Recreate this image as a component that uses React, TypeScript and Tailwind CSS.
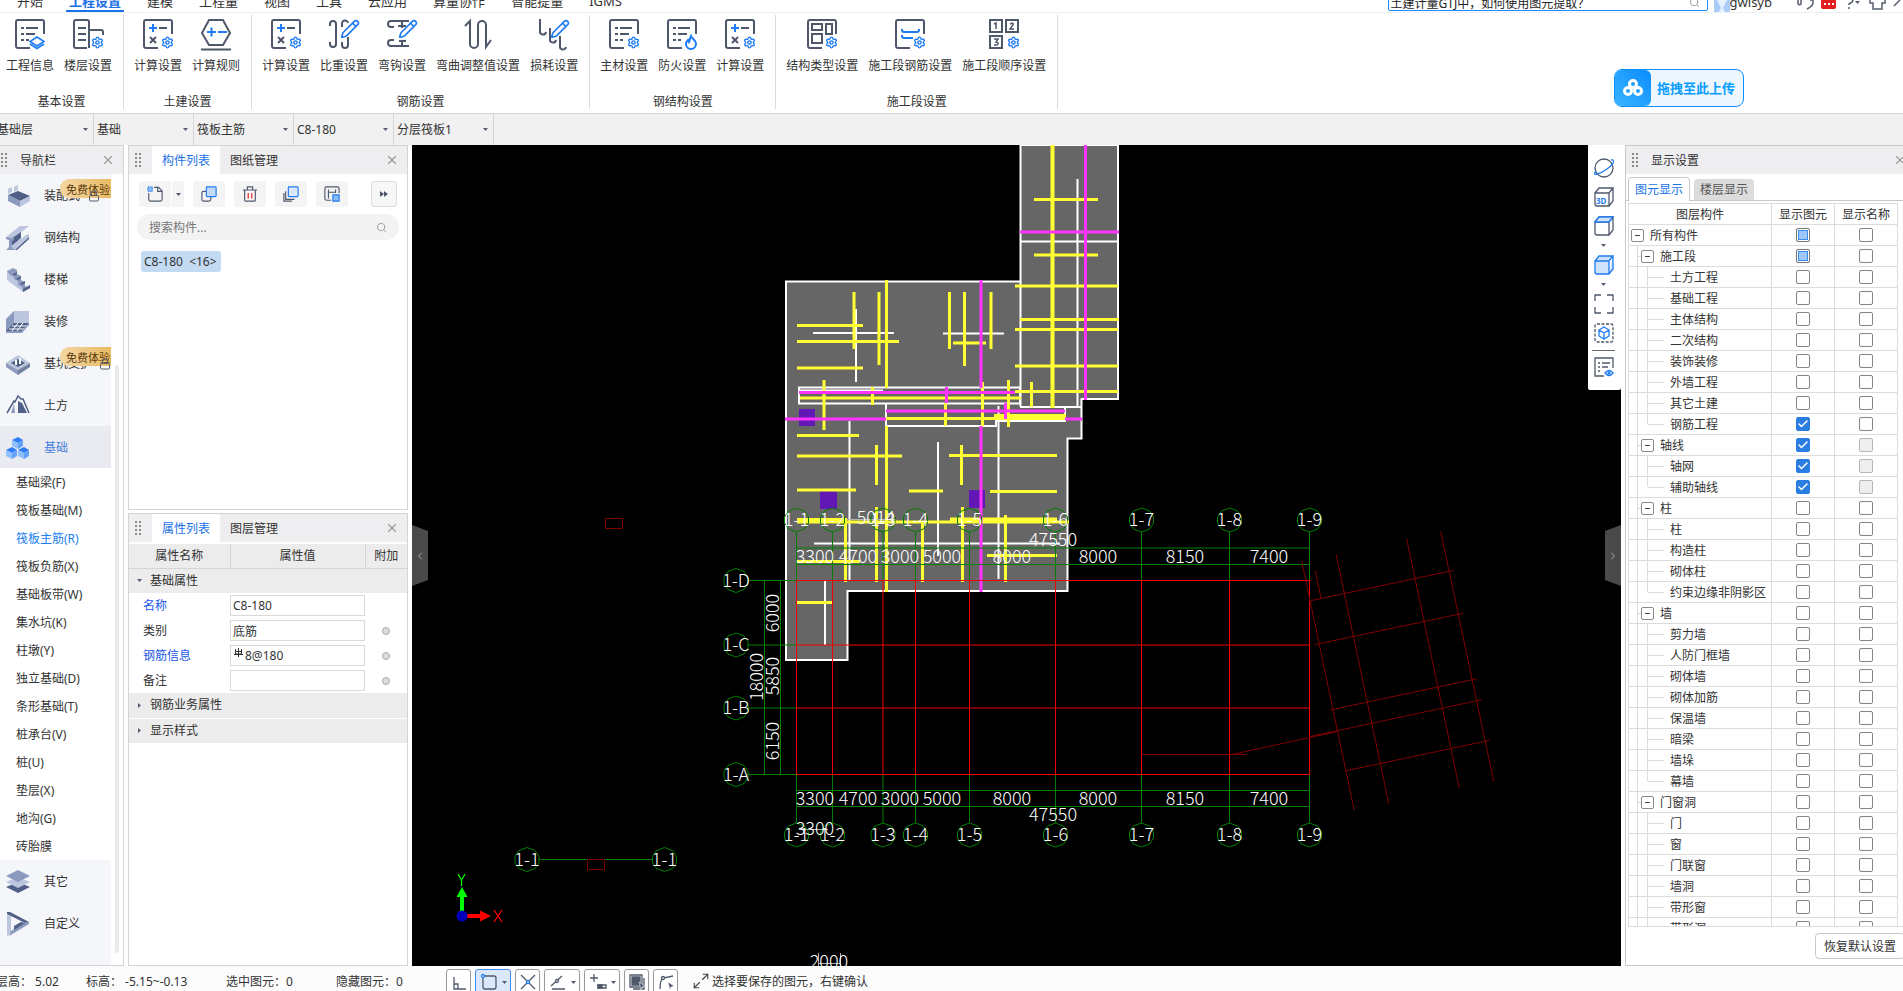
import { Fragment, type ReactNode } from "react";
import { Check, ChevronLeft, ChevronRight, Lock, Maximize2, Pencil, Search, Settings, X } from "lucide-react";

const menus = ["开始", "工程设置", "建模", "工程量", "视图", "工具", "云应用", "算量协作", "智能提量", "IGMS"];

const FRAME = "M29 15V3a2 2 0 0 0-2-2H3a2 2 0 0 0-2 2v24a2 2 0 0 0 2 2h12";

function Ico({ children }: { children: ReactNode }) {
  return (
    <svg width="30" height="30" viewBox="0 0 30 30" fill="none" stroke="#4f586b" strokeWidth="2" className="overflow-visible">
      {children}
    </svg>
  );
}

const Gear = () => <Settings x={18} y={17} size={13} strokeWidth={2.6} color="#1f7bf2" />;
const Pen = () => <Pencil x={11} y={0} size={20} strokeWidth={2} color="#1f7bf2" />;

const calcIcon = (
  <Ico>
    <path d={FRAME} />
    <path d="M6 9h8M10 5v8" stroke="#1f7bf2" />
    <path d="M16 9h8M7 18l6 6M13 18l-6 6" />
    <Gear />
  </Ico>
);

const ListLines = () => <path d="M6 9h3M11 9h12M6 15h3M11 15h9M6 21h3M11 21h3" />;

const ribbon = [
  {
    title: "基本设置",
    items: [
      {
        label: "工程信息",
        icon: (
          <Ico>
            <path d={FRAME} />
            <ListLines />
            <path d="M22 18l7 4.500-7 4.500-7-4.500zM15 25l7 4.500 7-4.500" stroke="#1f7bf2" strokeWidth="1.600" />
          </Ico>
        ),
      },
      {
        label: "楼层设置",
        icon: (
          <Ico>
            <path d="M14 29H3a2 2 0 0 1-2-2V3a2 2 0 0 1 2-2h11a2 2 0 0 1 2 2v26M16 11h12a2 2 0 0 1 2 2v3M5 9h8M5 15h8M5 21h8" />
            <Gear />
          </Ico>
        ),
      },
    ],
  },
  {
    title: "土建设置",
    items: [
      { label: "计算设置", icon: calcIcon },
      {
        label: "计算规则",
        icon: (
          <Ico>
            <path d="M8 1h14l7 13-7 12H8L1 14zM0 30.500h30" />
            <path d="M6 13h9M10.500 8.500v9M17 13h9" stroke="#1f7bf2" />
          </Ico>
        ),
      },
    ],
  },
  {
    title: "钢筋设置",
    items: [
      { label: "计算设置", icon: calcIcon },
      {
        label: "比重设置",
        icon: (
          <Ico>
            <path d="M1 7V5a3 3 0 0 1 6 0v20a3 3 0 0 1-6 0v-2M13 8V5a3 3 0 0 1 6-1M19 18v8a3 3 0 0 1-6 0v-3" />
            <Pen />
          </Ico>
        ),
      },
      {
        label: "弯钩设置",
        icon: (
          <Ico>
            <path d="M22 2H4a3 3 0 0 0 0 6h3M22 27H4a3 3 0 0 1 0-6h3M15 2v7M11 7h8M15 27v-5M12 22h7" />
            <Pen />
          </Ico>
        ),
      },
      {
        label: "弯曲调整值设置",
        icon: (
          <Ico>
            <path d="M2 7l5-5v23a4 4 0 0 0 8 0V6a4 4 0 0 1 8 0v22l5-7" />
          </Ico>
        ),
      },
      {
        label: "损耗设置",
        icon: (
          <Ico>
            <path d="M1 0v12a3 3 0 0 0 6 1M11 9v11a3 3 0 0 0 6 1M21 17v10a3 3 0 0 0 6 1" />
            <Pen />
          </Ico>
        ),
      },
    ],
  },
  {
    title: "钢结构设置",
    items: [
      {
        label: "主材设置",
        icon: (
          <Ico>
            <path d={FRAME} />
            <ListLines />
            <Gear />
          </Ico>
        ),
      },
      {
        label: "防火设置",
        icon: (
          <Ico>
            <path d={FRAME} />
            <ListLines />
            <path d="M24 17c1 3 5 4 5 8a5 5 0 0 1-10 0c0-2 1-3 2-4l1 2c1-2 1-4 2-6z" stroke="#1f7bf2" />
          </Ico>
        ),
      },
      { label: "计算设置", icon: calcIcon },
    ],
  },
  {
    title: "施工段设置",
    items: [
      {
        label: "结构类型设置",
        icon: (
          <Ico>
            <path d={FRAME} />
            <path d="M5 5h10v6H5zM19 5h6v10h-6zM5 15h10v9H5z" />
            <Gear />
          </Ico>
        ),
      },
      {
        label: "施工段钢筋设置",
        icon: (
          <Ico>
            <path d={FRAME} />
            <path d="M7 10v1a2 2 0 0 0 2 2h13a2 2 0 0 0 2-2v-1M7 16v1a2 2 0 0 0 2 2h9" stroke="#1f7bf2" />
            <Gear />
          </Ico>
        ),
      },
      {
        label: "施工段顺序设置",
        icon: (
          <Ico>
            <path d="M1 1h12v12H1zM17 1h12v12H17zM1 17h12v12H1z" />
            <path d="M5 5l2-1v6M21 5q4-2 3 1l-3 4h4M5 20h4l-2 3q4 1 1 3l-3 0" strokeWidth="1.500" />
            <Gear />
          </Ico>
        ),
      },
    ],
  },
];

const combos = ["基础层", "基础", "筏板主筋", "C8-180", "分层筏板1"];

const DARK = "#4f5f86";
const MID = "#8c9abf";
const LIGHT = "#bcc6de";

function NavIco({ children }: { children: ReactNode }) {
  return (
    <svg width="24" height="24" viewBox="0 0 24 24" className="shrink-0">
      {children}
    </svg>
  );
}

const navTop = [
  {
    label: "装配式",
    badge: "left-[88px]",
    icon: (
      <NavIco>
        <path d="M2 11l10-4 12 5-10 5z" fill={DARK} />
        <path d="M2 11l12 6v6L2 17z" fill={MID} />
        <path d="M14 17l10-5v5l-10 6z" fill={LIGHT} />
        <path d="M2 5l4-2v5L2 10zM8 3l4-2v5L8 8z" fill={LIGHT} />
      </NavIco>
    ),
  },
  {
    label: "钢结构",
    icon: (
      <NavIco>
        <path d="M0 11L14 0h9L8 12z" fill={LIGHT} />
        <path d="M5 13l10-7v6L5 21z" fill={DARK} />
        <path d="M0 11l8 1v2l-2 1v6l3 2v1H0l3-3v-7l-3-1z" fill={MID} />
        <path d="M5 20L20 9l3-1v3L9 24z" fill={LIGHT} />
        <path d="M9 24L23 11v2L11 24z" fill={DARK} />
      </NavIco>
    ),
  },
  {
    label: "楼梯",
    icon: (
      <NavIco>
        <path d="M1 3l0 9 16 12V17L4 3z" fill={LIGHT} />
        <path d="M1 3l6-3 4 2v4l4 2v4l4 2v4l5 2-7 4-1-5-4-2v-4l-4-2V9L4 7z" fill={MID} />
        <path d="M7 6l4-2v2l-3 2zM10 11l5-3v2l-3 2zM14 16l5-3v2l-3 2zM17 21l7-4v3l-7 4z" fill={DARK} />
      </NavIco>
    ),
  },
  {
    label: "装修",
    icon: (
      <NavIco>
        <path d="M8 1h15v13H8z" fill={LIGHT} />
        <path d="M8 1v13L0 22V9z" fill={MID} />
        <path d="M8 13h15l-7 8H0z" fill={DARK} />
        <path d="M6 16h15M3 19h16M12 13l-6 8M17 13l-6 8" stroke="#fff" strokeWidth="1" />
        <path d="M0 21h16l7-8v2l-7 8H0z" fill={MID} />
      </NavIco>
    ),
  },
  {
    label: "基坑支护",
    badge: "left-[99px]",
    icon: (
      <NavIco>
        <path d="M12 3l12 8-12 7L0 11z" fill={LIGHT} />
        <path d="M12 7l7 4-7 4-7-4z" fill={DARK} />
        <path d="M9 8h2v5H9zM13 6h2v6h-2z" fill="#fff" />
        <path d="M0 11l12 7v5L0 15z" fill={MID} />
        <path d="M24 11l-12 7v5l12-8z" fill="#73829f" />
      </NavIco>
    ),
  },
  {
    label: "土方",
    icon: (
      <NavIco>
        <path d="M1 19L8 7l1 1 3-6 3 3 2 0 6 14" fill="none" stroke={DARK} strokeWidth="1.500" />
        <path d="M12 7l4 2 5 10h-9z" fill={DARK} />
        <path d="M8 10l1 9H5z" fill={MID} />
      </NavIco>
    ),
  },
  {
    label: "基础",
    active: true,
    icon: (
      <NavIco>
        {[
          [6, 1],
          [0, 11],
          [12, 11],
        ].map(([x, y]) => (
          <g key={x} transform={`translate(${x} ${y})`}>
            <path d="M0 3l6-3 5 3-5 3z" fill="#2f7df6" />
            <path d="M0 3l6 3v6L0 9z" fill="#8fc0fd" />
            <path d="M11 3L6 6v6l5-3z" fill="#62a3fa" />
          </g>
        ))}
      </NavIco>
    ),
  },
];

const navBottom = [
  {
    label: "其它",
    icon: (
      <NavIco>
        <path d="M12 12l12 5-12 6-12-6z" fill={DARK} />
        <path d="M12 7l12 5-12 6-12-6z" fill={LIGHT} />
        <path d="M12 0l12 6-12 6L0 6z" fill={MID} />
      </NavIco>
    ),
  },
  {
    label: "自定义",
    icon: (
      <NavIco>
        <path d="M1 2l4 2v16l-3 4-1-1z" fill={LIGHT} />
        <path d="M1 0h3l19 10-4 1L5 4 1 2z" fill={DARK} />
        <path d="M23 10v2L3 24l2-5 13-8z" fill={MID} />
        <path d="M8 14l7-4 4 1L8 18z" fill={DARK} />
      </NavIco>
    ),
  },
];

const subItems = [
  "基础梁(F)",
  "筏板基础(M)",
  "筏板主筋(R)",
  "筏板负筋(X)",
  "基础板带(W)",
  "集水坑(K)",
  "柱墩(Y)",
  "独立基础(D)",
  "条形基础(T)",
  "桩承台(V)",
  "桩(U)",
  "垫层(X)",
  "地沟(G)",
  "砖胎膜",
];

type Mark = "on" | "off" | "part" | "dis";
type Row = { t: string; lv: 0 | 1 | 2; a?: Mark; b?: Mark; last?: boolean };

const rows: Row[] = [
  { t: "所有构件", lv: 0, a: "part" },
  { t: "施工段", lv: 1, a: "part" },
  { t: "土方工程", lv: 2 },
  { t: "基础工程", lv: 2 },
  { t: "主体结构", lv: 2 },
  { t: "二次结构", lv: 2 },
  { t: "装饰装修", lv: 2 },
  { t: "外墙工程", lv: 2 },
  { t: "其它土建", lv: 2 },
  { t: "钢筋工程", lv: 2, a: "on", last: true },
  { t: "轴线", lv: 1, a: "on", b: "dis" },
  { t: "轴网", lv: 2, a: "on", b: "dis" },
  { t: "辅助轴线", lv: 2, a: "on", b: "dis", last: true },
  { t: "柱", lv: 1 },
  { t: "柱", lv: 2 },
  { t: "构造柱", lv: 2 },
  { t: "砌体柱", lv: 2 },
  { t: "约束边缘非阴影区", lv: 2, last: true },
  { t: "墙", lv: 1 },
  { t: "剪力墙", lv: 2 },
  { t: "人防门框墙", lv: 2 },
  { t: "砌体墙", lv: 2 },
  { t: "砌体加筋", lv: 2 },
  { t: "保温墙", lv: 2 },
  { t: "暗梁", lv: 2 },
  { t: "墙垛", lv: 2 },
  { t: "幕墙", lv: 2, last: true },
  { t: "门窗洞", lv: 1 },
  { t: "门", lv: 2 },
  { t: "窗", lv: 2 },
  { t: "门联窗", lv: 2 },
  { t: "墙洞", lv: 2 },
  { t: "带形窗", lv: 2 },
  { t: "带形洞", lv: 2 },
];

function Grip() {
  return (
    <svg width="7" height="15" viewBox="0 0 7 15" fill="#8a8a8a" className="shrink-0">
      {[0, 4, 8, 12].map((y) => (
        <Fragment key={y}>
          <rect x="0" y={y} width="2" height="2" />
          <rect x="4" y={y} width="2" height="2" />
        </Fragment>
      ))}
    </svg>
  );
}

function Caret({ className = "" }: { className?: string }) {
  return (
    <svg width="5" height="3" viewBox="0 0 5 3" fill="#555d6e" className={className}>
      <path d="M0 0h5L2.500 3z" />
    </svg>
  );
}

function CloseButton({ label }: { label: string }) {
  return (
    <button aria-label={label} className="shrink-0 text-[#9a9a9a]">
      <X size={14} strokeWidth={2} />
    </button>
  );
}

function NavItem({ item }: { item: { label: string; icon: ReactNode; badge?: string; active?: boolean } }) {
  return (
    <a
      href="#"
      className={`relative flex h-[42px] items-center gap-[14px] pt-[2px] pl-[6px] ${item.active ? "bg-[#e9ebf0] text-[#4a7fe0]" : ""}`}
    >
      {item.icon}
      {item.label}
      {item.badge && (
        <>
          <span className="absolute top-[5px] right-0 flex h-[19px] w-[51px] items-center rounded-l-[9px] bg-linear-to-r from-[#f3d6a2] to-[#e9bb62] pt-[2px] pl-[6px] text-[11px] text-[#5c3a10]">
            免费体验
          </span>
          <Lock size={12} className={`absolute top-4 text-[#555d6e] ${item.badge}`} />
        </>
      )}
    </a>
  );
}

function PanelTabs({ active, other }: { active: string; other: string }) {
  return (
    <div className="flex h-7 items-center bg-[#eeeef0] pr-2 pl-[6px]">
      <Grip />
      <button className="ml-[10px] h-7 bg-white px-[10px] pt-[2px] text-[#1a6fe6]">{active}</button>
      <button className="h-7 px-[10px] pt-[2px]">{other}</button>
      <span className="flex-1" />
      <CloseButton label={`关闭${active}`} />
    </div>
  );
}

function ToolButton({ label, children }: { label: string; children: ReactNode }) {
  return (
    <button aria-label={label} className="flex h-[26px] w-8 items-center justify-center rounded-[3px] bg-[#f4f4f5]">
      <svg width="16" height="16" viewBox="0 0 18 18" fill="none" stroke="#4f586b" strokeWidth="1.300">
        {children}
      </svg>
    </button>
  );
}

function Tick({ mark, label }: { mark: Mark; label: string }) {
  const look =
    mark === "part"
      ? "bg-[#9cc8fb] border-[#777] shadow-[inset_0_0_0_1px_#fff,inset_0_0_0_2px_#3d8bf0]"
      : mark === "dis"
        ? "bg-[#efefef] border-[#b5b5b5]"
        : "border-[#858585] checked:border-[#2a7de1] checked:bg-[#2a7de1]";
  return (
    <label className="relative mx-auto block size-[14px]">
      <input
        type="checkbox"
        aria-label={label}
        defaultChecked={mark === "on"}
        disabled={mark === "dis"}
        className={`peer block size-[14px] appearance-none rounded-[2px] border ${look}`}
      />
      <Check size={12} strokeWidth={3} className="pointer-events-none absolute top-px left-px hidden text-white peer-checked:block" />
    </label>
  );
}

function Expander({ name }: { name: string }) {
  return (
    <button
      aria-label={`折叠${name}`}
      className="flex size-[13px] shrink-0 items-center justify-center rounded-[2px] border border-[#8a8a8a] bg-white"
    >
      <span className="h-px w-[5px] bg-[#444]" />
    </button>
  );
}

function TreeRow({ row }: { row: Row }) {
  return (
    <tr className="h-[21px]">
      <td className="border border-[#dcdcdc] p-0">
        <div className="flex h-5 items-center whitespace-nowrap">
          {row.lv === 0 && (
            <span className="flex pl-[2px]">
              <Expander name={row.t} />
            </span>
          )}
          {row.lv > 0 && <span className="w-[9px] shrink-0 self-stretch border-r border-[#dcdcdc]" />}
          {row.lv === 1 && (
            <>
              <span className="h-px w-[3px] bg-[#dcdcdc]" />
              <Expander name={row.t} />
            </>
          )}
          {row.lv === 2 && (
            <>
              <span className={`w-[10px] shrink-0 border-r border-[#dcdcdc] ${row.last ? "h-[10px] self-start" : "self-stretch"}`} />
              <span className="h-px w-4 shrink-0 bg-[#dcdcdc]" />
            </>
          )}
          <span className="ml-[6px] pt-[2px]">{row.t}</span>
        </div>
      </td>
      <td className="border border-[#dcdcdc] p-0">
        <Tick mark={row.a ?? "off"} label={`${row.t}显示图元`} />
      </td>
      <td className="border border-[#dcdcdc] p-0">
        <Tick mark={row.b ?? "off"} label={`${row.t}显示名称`} />
      </td>
    </tr>
  );
}

// drawing data: vertical bars are [x, y1, y2], horizontal bars are [y, x1, x2]
const yellowV = [
  [854, 292, 349], [879, 292, 365], [886.5, 280, 388], [949.5, 292, 349], [964.5, 292, 366], [991, 292, 349],
  [824, 380, 430], [872.5, 387, 405], [982.5, 382, 426], [1008.5, 380, 427], [1031.5, 382, 407], [945.5, 403, 426],
  [876.5, 445, 485], [961.5, 445, 485], [886.5, 426, 592], [845.5, 522, 582], [876.5, 507, 582], [922.5, 523, 582],
  [962.5, 507, 582], [1005.5, 515, 582],
];
const yellowH = [
  [199.5, 1034, 1098], [255, 1034, 1098], [286, 1015, 1118], [319.5, 1020, 1119], [329.5, 1015, 1118],
  [366, 1015, 1118], [391.5, 1015, 1118], [325.5, 797, 863], [341.5, 797, 899], [368, 797, 863], [343, 953, 986],
  [398, 800, 1021], [418.5, 886, 1065], [415.5, 994, 1066], [435.5, 797, 859], [456, 797, 902], [455.5, 949, 1057],
  [490, 797, 856], [491, 909, 943], [491.5, 990, 1057], [519.5, 797, 847], [522, 797, 1069], [519, 950, 1057],
  [555.5, 987, 1057], [561.5, 797, 860], [602.5, 797, 833],
];
const magentaV = [[1085.5, 145, 400], [981, 280, 388], [946.5, 387, 403], [1005.5, 403, 419], [981, 426, 592]];
const magentaH = [[232, 1020, 1119], [392.5, 799, 1015], [411, 886, 1065], [419, 785, 886], [419, 1065, 1082]];
const whiteV = [
  [1077.5, 179, 406], [856, 309, 382], [998.5, 406, 579], [938, 442, 556], [849.5, 421, 580], [825, 580, 645],
  [1020.5, 281, 407],
];
const whiteH = [[241.5, 1020, 1118], [390.5, 799, 883], [333, 813, 894], [333.5, 943, 1004], [543.5, 814, 1060], [407, 1020, 1082]];

const v = (list: number[][]) => list.map(([x, a, b]) => `M${x} ${a}V${b}`).join("");
const h = (list: number[][]) => list.map(([y, a, b]) => `M${a} ${y}H${b}`).join("");

const axesX = [796.5, 832.5, 883, 915.5, 969.5, 1055.5, 1141.5, 1229.5, 1309.5];
const axesY: [string, number][] = [["1-D", 580.5], ["1-C", 645], ["1-B", 708], ["1-A", 774.5]];
const spans: [string, number][] = [
  ["3300", 815], ["4700", 858], ["3000", 900], ["5000", 942], ["8000", 1012], ["8000", 1098], ["8150", 1185], ["7400", 1269],
];
const tilted = [
  [1301.7, 561, 1354.3, 810.7], [1315.3, 570.7, 1321, 598.3], [1336, 554, 1388.7, 803.3], [1406.7, 539, 1459.3, 788.3],
  [1440.7, 531.3, 1493.7, 781.3], [1309.3, 601, 1453.7, 570.3], [1314.3, 644.7, 1463, 613.3], [1330, 710, 1477, 678.7],
  [1309.3, 736.7, 1481.7, 699.7], [1345, 771, 1489.7, 740.3], [1231.7, 754.5, 1336.7, 731.7], [1142, 754.5, 1246, 754.5],
];

function Bubble({ x, y, text }: { x: number; y: number; text: string }) {
  return (
    <g>
      <polygon
        points="0,-12 8,-9 12,-3 12,3 8,9 0,12 -8,9 -12,3 -12,-3 -8,-9"
        transform={`translate(${x} ${y})`}
        fill="none"
        stroke="#008000"
      />
      <text x={x} y={y + 6}>{text}</text>
    </g>
  );
}

function Drawing() {
  return (
    <svg viewBox="412 145 1209 821" preserveAspectRatio="xMidYMid slice" className="absolute inset-0 h-full w-full bg-black">
      <path
        d="M786 281.500H1020.500V145H1118V399H1081.500V438.500H1067.500V591H847.500V660H786z"
        fill="#666"
        stroke="#fff"
        strokeWidth="2"
      />
      <path d="M799 387.500H1020V403.500H799zM886 403V426H996V421H1065V407" fill="none" stroke="#fff" strokeWidth="2" />
      <path d={v(whiteV) + h(whiteH)} stroke="#fff" strokeWidth="2" />
      <g fill="#6118b4">
        <rect x="799" y="409" width="16" height="17" />
        <rect x="820" y="491" width="17" height="18" />
        <rect x="969" y="490" width="16" height="18" />
      </g>
      <path d="M1052.500 145V408" stroke="#ffff33" strokeWidth="4" />
      <path d={v(yellowV) + h(yellowH)} stroke="#ffff33" strokeWidth="3" />
      <path d={v(magentaV) + h(magentaH)} stroke="#ff33ff" strokeWidth="3" />

      <path d={v(axesX.map((x) => [x, 580, 775]))} stroke="#f00000" />
      <path d={h(axesY.map(([, y]) => [y, 796, 1310]))} stroke="#f00000" />
      <path d={v(axesX.flatMap((x) => [[x, 532, 580], [x, 775, 823]]))} stroke="#008000" />
      <path d="M796 548H1310M796 564.500H1310M796 790.500H1310M796 806.500H1310M764.500 580V775M780.500 580V775" stroke="#008000" />
      <path d={h(axesY.map(([, y]) => [y, 748, 796]))} stroke="#008000" />
      {tilted.map(([x1, y1, x2, y2]) => (
        <line key={`${x1}-${y1}`} x1={x1} y1={y1} x2={x2} y2={y2} stroke="#800000" />
      ))}
      <path d="M605.500 518.500h17v10h-17zM587.500 859.500h17v10h-17z" fill="none" stroke="#800000" />
      <path d="M539 859.500H587M605 859.500H653" stroke="#008000" />
      <path d="M847 519.500H885M799 829.500H828M818.500 953V966M840.500 953V966M818 963.500H840" stroke="#b5b5b5" />

      <g fill="#fff" fontSize="18" fontWeight="300" textAnchor="middle" fontFamily="'Noto Sans CJK SC', sans-serif">
        {axesX.map((x, i) => (
          <Fragment key={x}>
            <Bubble x={x} y={520} text={`1-${i + 1}`} />
            <Bubble x={x} y={835} text={`1-${i + 1}`} />
          </Fragment>
        ))}
        {axesY.map(([t, y]) => (
          <Bubble key={t} x={736} y={y} text={t} />
        ))}
        <Bubble x={527} y={859.5} text="1-1" />
        <Bubble x={664.5} y={859.5} text="1-1" />
        {spans.map(([t, x]) => (
          <Fragment key={x}>
            <text x={x} y="563">{t}</text>
            <text x={x} y="805">{t}</text>
          </Fragment>
        ))}
        <text x="1053" y="546">47550</text>
        <text x="1053" y="821">47550</text>
        <text x="876" y="524">5014</text>
        <text x="815" y="835">3300</text>
        <text x="829" y="968">2000</text>
        <text transform="translate(779 613) rotate(-90)">6000</text>
        <text transform="translate(779 676) rotate(-90)">5850</text>
        <text transform="translate(779 741) rotate(-90)">6150</text>
        <text transform="translate(763 677) rotate(-90)">18000</text>
      </g>

      <path d="M460 914V897H456.500L462 887L467.500 897H464V914z" fill="#00ff00" />
      <path d="M466 914H480V910.500L491 916L480 921.500V918H466z" fill="#ff0000" />
      <circle cx="462" cy="916" r="5.500" fill="#0000b8" />
      <path d="M458 874L461.500 880L465 874M461.500 880V886" fill="none" stroke="#00ff00" strokeWidth="1.300" />
      <path d="M494 910L502 922M502 910L494 922" stroke="#ff0000" strokeWidth="1.300" />
    </svg>
  );
}

function ViewButton({ label, children }: { label: string; children: ReactNode }) {
  return (
    <button aria-label={label}>
      <svg width="20" height="20" viewBox="0 0 20 20" fill="none" stroke="#4f586b" strokeWidth="1.300">
        {children}
      </svg>
    </button>
  );
}

const CUBE = "M1 6v11a2 2 0 0 0 2 2h12V6zM1 6l4-5h14l-4 5M19 1v13l-4 5";

function ViewBar() {
  return (
    <div className="absolute top-0 right-0 flex w-[33px] flex-col items-center rounded-b-[2px] bg-white pt-[13px] pr-[2px] pb-[13px]">
      <ViewButton label="动态观察">
        <circle cx="10" cy="10" r="9" />
        <path d="M2 13C-3 19 6 16 13 11S22 1 17 2" stroke="#1f7bf2" />
      </ViewButton>
      <span className="h-[9px]" />
      <ViewButton label="三维">
        <path d={CUBE} />
        <text x="2" y="17" fontSize="8" fontWeight="700" fill="#1f7bf2" stroke="none">3D</text>
      </ViewButton>
      <span className="h-[9px]" />
      <ViewButton label="俯视">
        <path d={CUBE} />
        <path d="M1 6l4-5h14l-4 5z" fill="#cfe2fb" stroke="#1f7bf2" />
      </ViewButton>
      <Caret className="my-[8px]" />
      <ViewButton label="实体显示">
        <path d={CUBE} fill="#cfe2fb" stroke="#1f7bf2" />
      </ViewButton>
      <Caret className="my-[8px]" />
      <ViewButton label="全屏">
        <path d="M1 7V1h6M13 1h6v6M19 13v6h-6M7 19H1v-6" />
      </ViewButton>
      <span className="h-[9px]" />
      <ViewButton label="局部三维">
        <rect x="1" y="1" width="18" height="18" rx="2" strokeDasharray="3 1.500" />
        <path d="M10 4l5 3v6l-5 3-5-3V7zM5 7l5 3 5-3M10 10v6" stroke="#1f7bf2" />
      </ViewButton>
      <span className="mt-[7px] mb-[6px] h-px w-[23px] bg-[#666]" />
      <ViewButton label="显示设置">
        <path d="M10 19H1V1h18v10M4 6h2M8 6h8M4 10h2M8 10h6M4 14h2" />
        <path d="M11 16q4-5 8 0-4 5-8 0z" stroke="#1f7bf2" />
        <circle cx="15" cy="16" r="1" stroke="#1f7bf2" />
      </ViewButton>
    </div>
  );
}

const statusTools = [
  { label: "正交", d: "M4 4v12h12M4 11h4v5", caret: false },
  { label: "捕捉", d: "M3 3h11a2 2 0 0 1 2 2v9a2 2 0 0 1-2 2H5a2 2 0 0 1-2-2z", caret: true, on: true },
  { label: "交点", d: "M2 2l14 14M16 2L2 16", caret: false },
  { label: "角度", d: "M2 13L13 3M3 16h13", caret: true },
  { label: "输入", d: "M1 5h8M5 1v8M9 12h8v3H9z", caret: true },
  { label: "选择", d: "M2 2h12v12H2zM16 5v11H5", caret: false },
  { label: "折线", d: "M3 16Q3 7 6 5L16 3", caret: false },
];

const props = [
  { label: "名称", value: "C8-180", blue: true, dot: false },
  { label: "类别", value: "底筋", blue: false, dot: true },
  { label: "钢筋信息", value: "8@180", blue: true, dot: true },
  { label: "备注", value: "", blue: false, dot: true },
];

export default function App() {
  return (
    <div className="relative flex h-screen flex-col overflow-hidden bg-white font-['Noto_Sans','Noto_Sans_CJK_SC',sans-serif] text-[12px] leading-4 text-[#333]">
      {/* menu */}
      <header className="flex h-[13px] shrink-0 items-end overflow-hidden border-b border-[#f0f0f0] text-[13px]">
        <nav className="flex pl-1">
          {menus.map((m, i) => (
            <a
              key={m}
              href="#"
              className={`flex h-6 items-center px-[13px] pt-[2px] ${i === 1 ? "relative font-bold text-[#1a6fe6]" : ""}`}
            >
              {m}
              {i === 1 && <span className="absolute inset-x-[10px] bottom-0 h-[2px] bg-[#1a73e8]" />}
            </a>
          ))}
        </nav>
        <span className="flex-1" />
        <label className="relative mb-px flex w-[320px] items-end">
          <input
            aria-label="搜索"
            defaultValue="土建计量GTJ中，如何使用图元提取？"
            className="h-[18px] w-full rounded-[2px] border border-[#1a8cff] px-[2px] pt-[2px] text-[12px] text-[#222]"
          />
          <Search size={11} className="absolute right-[8px] bottom-[3px] text-[#999]" />
        </label>
        <svg width="16" height="16" viewBox="0 0 16 16" className="ml-[6px] translate-y-1">
          <rect width="16" height="16" fill="#a9cdf8" />
          <path d="M3 0h10L9 8l4 8H3l4-8z" fill="#e8f2fe" />
        </svg>
        <span className="flex h-5 items-center">gwlsyb</span>
        <svg width="106" height="12" viewBox="0 0 106 12" fill="none" stroke="#555d6e" strokeWidth="1.500" className="ml-[25px]">
          <path d="M1 0v4a2 2 0 0 0 3 0V0M13 0h3v3q0 3-6 6" />
          <rect x="24" y="-4" width="15" height="13" rx="2" fill="#e02020" stroke="none" />
          <path d="M27 4h2M31 4h2M35 4h2" stroke="#fff" strokeWidth="2" />
          <path d="M56 0q0 2-4 4v1M52 7v2" />
          <path d="M58 1h5l-2.500 3z" fill="#555d6e" stroke="none" />
          <path d="M73 0v3h3v6h9V3h3V0" />
          <path d="M97 6l6-6" />
        </svg>
      </header>

      {/* ribbon */}
      <div className="flex h-[101px] shrink-0 border-b border-[#d4d4d4] pt-[2px] pb-[4px]">
        {ribbon.map((g, i) => (
          <section key={g.title} className="flex flex-col border-r border-[#dcdcdc]">
            <div className={`flex gap-[10px] pt-1 pr-[11px] ${i === 0 ? "pl-[6px]" : "pl-[10px]"}`}>
              {g.items.map((it) => (
                <button key={it.label} className="flex flex-col items-center gap-[9px] whitespace-nowrap">
                  {it.icon}
                  {it.label}
                </button>
              ))}
            </div>
            <h2 className="mt-5 text-center">{g.title}</h2>
          </section>
        ))}
      </div>

      <button className="absolute top-[69px] right-[159px] flex h-[38px] w-[130px] items-center gap-[6px] overflow-hidden rounded-[8px] border border-[#0a8fff] bg-[#eef7ff] text-[13px] font-bold text-[#069cff]">
        <span className="flex h-full w-9 shrink-0 items-center justify-center rounded-r-[6px] bg-linear-to-tr from-[#38b4ff] to-[#068dff]">
          <svg width="20" height="18" viewBox="0 0 20 18" fill="none" stroke="#fff" strokeWidth="3">
            <circle cx="10" cy="5" r="3.500" />
            <circle cx="5" cy="12" r="3.500" />
            <circle cx="15" cy="12" r="3.500" />
          </svg>
        </span>
        拖拽至此上传
      </button>

      {/* floor / component pickers */}
      <div className="flex h-[31px] shrink-0 bg-[#f1f1f1]">
        <div className="-ml-[6px] flex">
          {combos.map((c) => (
            <label key={c} className="relative flex w-[100px] items-center border-r border-[#d6d6d6]">
              <select aria-label={c} className="h-full w-full appearance-none pt-px pl-[3px]">
                <option>{c}</option>
              </select>
              <Caret className="absolute right-[5px]" />
            </label>
          ))}
        </div>
      </div>

      <main className="flex min-h-0 flex-1 gap-1">
        {/* navigation */}
        <aside className="flex w-[124px] shrink-0 flex-col border-y border-r border-[#d4d4d4]">
          <div className="flex h-7 shrink-0 items-center bg-[#eeeef0] pr-2 pl-px">
            <Grip />
            <span className="ml-3 pt-[2px]">导航栏</span>
            <span className="flex-1" />
            <CloseButton label="关闭导航栏" />
          </div>
          <div className="flex min-h-0 flex-1">
            <div className="w-[111px] overflow-hidden bg-[#f5f6f9]">
              {navTop.map((it) => (
                <NavItem key={it.label} item={it} />
              ))}
              <div className="bg-white">
                {subItems.map((s, i) => (
                  <a key={s} href="#" className={`flex h-7 items-center pt-[2px] pl-4 ${i === 2 ? "text-[#1a80f0]" : ""}`}>
                    {s}
                  </a>
                ))}
              </div>
              {navBottom.map((it) => (
                <NavItem key={it.label} item={it} />
              ))}
            </div>
            <div className="flex flex-1 flex-col justify-end pb-3 pl-1">
              <span className="h-[588px] w-1 rounded-full bg-[#e9e9eb]" />
            </div>
          </div>
        </aside>

        <div className="flex w-[280px] shrink-0 flex-col gap-[3px]">
          {/* component list */}
          <section className="h-[365px] border border-[#d4d4d4]">
            <PanelTabs active="构件列表" other="图纸管理" />
            <div className="flex pt-[7px] pr-[10px] pl-[10px]">
              <ToolButton label="新建">
                <path d="M8 1.500h5l4 4V15a2 2 0 0 1-2 2H4a2 2 0 0 1-2-2V8M12 1v5h5" />
                <path d="M1 1h5v5H1z" strokeDasharray="1 1" stroke="#1f7bf2" fill="#8cbaf6" />
              </ToolButton>
              <button aria-label="新建选项" className="ml-px flex w-3 items-center justify-center bg-[#f4f4f5]">
                <Caret />
              </button>
              <div className="ml-[9px] flex gap-[9px]">
                <ToolButton label="复制">
                  <rect x="1" y="6" width="10" height="11" rx="2" />
                  <rect x="6" y="1" width="11" height="11" rx="1" fill="#c4d9f5" stroke="#1f7bf2" />
                </ToolButton>
                <ToolButton label="删除">
                  <path d="M1 4.500h16M6 4V1h6v3M3 5v11a1 1 0 0 0 1 1h10a1 1 0 0 0 1-1V5" />
                  <path d="M7 8v6M11 8v6" stroke="#e02020" />
                </ToolButton>
                <ToolButton label="层间复制">
                  <path d="M1 8v9h9M3 6v9h10" />
                  <rect x="6" y="1" width="11" height="11" rx="1" fill="#dbe8fa" stroke="#1f7bf2" />
                </ToolButton>
                <ToolButton label="存档">
                  <path d="M8 16H3a2 2 0 0 1-2-2V3a2 2 0 0 1 2-2h12a2 2 0 0 1 2 2v5M5 4v10M13 4v4M5 7h8" />
                  <path d="M10 10h7v7h-7z" fill="#8cbaf6" stroke="#1f7bf2" />
                </ToolButton>
              </div>
              <span className="flex-1" />
              <button aria-label="更多" className="flex size-[26px] items-center justify-center rounded-[3px] border border-[#ddd] bg-[#f7f7f8]">
                <svg width="8" height="6" viewBox="0 0 8 6" fill="#4f586b">
                  <path d="M0 0l4 3-4 3zM4 0l4 3-4 3z" />
                </svg>
              </button>
            </div>
            <label className="mx-2 mt-[7px] flex h-[26px] items-center rounded-full bg-[#f3f3f4] px-3">
              <input aria-label="搜索构件" placeholder="搜索构件..." className="min-w-0 flex-1 pt-[2px] placeholder:text-[#777]" />
              <Search size={11} className="text-[#999]" />
            </label>
            <button className="mt-[11px] ml-3 block h-[21px] rounded-[3px] bg-[#c3daf3] pr-1 pl-[3px] whitespace-nowrap">
              C8-180 &nbsp;&lt;16&gt;
            </button>
          </section>

          {/* properties */}
          <section className="min-h-0 flex-1 border border-[#d4d4d4]">
            <PanelTabs active="属性列表" other="图层管理" />
            <table className="mt-[2px] w-full table-fixed border-collapse">
              <colgroup>
                <col className="w-[101px]" />
                <col />
                <col className="w-[42px]" />
              </colgroup>
              <thead>
                <tr className="h-6 bg-[#ececec]">
                  <th className="border-r border-b border-[#d4d4d4] p-0 pt-px font-normal">属性名称</th>
                  <th className="border-r border-b border-[#d4d4d4] p-0 pt-px font-normal">属性值</th>
                  <th className="border-b border-[#d4d4d4] p-0 pt-px font-normal">附加</th>
                </tr>
              </thead>
              <tbody>
                <tr className="h-[25px] bg-[#ececec]">
                  <td colSpan={3} className="p-0">
                    <span className="flex items-center gap-2 pl-2">
                      <Caret />
                      基础属性
                    </span>
                  </td>
                </tr>
                {props.map((p) => (
                  <tr key={p.label} className="h-[25px]">
                    <td className={`p-0 pt-px pl-[14px] ${p.blue ? "text-[#1a56e8]" : ""}`}>
                      <label htmlFor={p.label}>{p.label}</label>
                    </td>
                    <td className="p-0">
                      {p.label === "钢筋信息" ? (
                        <span className="relative block">
                          <input id={p.label} defaultValue={p.value} className="block h-[21px] w-full border border-[#d9d9d9] pl-[14px]" />
                          <svg width="9" height="9" viewBox="0 0 9 9" fill="none" stroke="#333" className="absolute top-[3px] left-1">
                            <path d="M4.500 0v9M1.500 1v5h6V1M0 6.500h9M1.500 3.500h6" />
                          </svg>
                        </span>
                      ) : (
                        <input id={p.label} defaultValue={p.value} className="block h-[21px] w-full border border-[#d9d9d9] pl-[2px]" />
                      )}
                    </td>
                    <td className="p-0">
                      {p.dot && <span className="mx-auto block size-2 rounded-full border border-[#aaa] bg-[#ddd]" />}
                    </td>
                  </tr>
                ))}
                {["钢筋业务属性", "显示样式"].map((t) => (
                  <tr key={t} className="h-[25px] border-b border-white bg-[#ececec]">
                    <td colSpan={3} className="p-0">
                      <span className="flex items-center gap-2 pl-2">
                        <Caret className="-rotate-90" />
                        {t}
                      </span>
                    </td>
                  </tr>
                ))}
              </tbody>
            </table>
          </section>
        </div>

        {/* canvas */}
        <div className="relative min-w-0 flex-1 overflow-hidden bg-black">
          <Drawing />
          <button
            aria-label="收起左侧"
            className="absolute top-[380px] left-0 flex h-[61px] w-4 items-center justify-center bg-[#4a4a4a] text-[#aaa] [clip-path:polygon(0_0,100%_10%,100%_90%,0_100%)]"
          >
            <ChevronLeft size={12} />
          </button>
          <button
            aria-label="收起右侧"
            className="absolute top-[380px] right-0 flex h-[61px] w-4 items-center justify-center bg-[#4a4a4a] text-[#aaa] [clip-path:polygon(0_10%,100%_0,100%_100%,0_90%)]"
          >
            <ChevronRight size={12} />
          </button>
          <ViewBar />
        </div>

        {/* display settings */}
        <aside className="flex w-[278px] shrink-0 flex-col overflow-hidden border-y border-l border-[#c8c8c8]">
          <div className="flex h-7 shrink-0 items-center bg-[#eeeef0] pl-[6px]">
            <Grip />
            <span className="ml-3 pt-[2px]">显示设置</span>
            <span className="flex-1" />
            <span className="-mr-1 flex">
              <CloseButton label="关闭显示设置" />
            </span>
          </div>
          <div className="flex h-[27px] shrink-0 items-end gap-1 border-b border-[#c8c8c8] pl-[2px]">
            <button className="-mb-px h-6 rounded-t-[4px] border border-b-0 border-[#c8c8c8] bg-white px-[6px] pt-px text-[#1a73e8]">
              图元显示
            </button>
            <button className="h-[21px] rounded-t-[4px] bg-[#dcdcdc] px-[6px] pt-px text-[#555]">楼层显示</button>
          </div>
          <div className="mt-[2px] ml-[2px] min-h-0 flex-1 overflow-hidden border-b border-[#dcdcdc]">
            <table className="w-[269px] table-fixed border-collapse">
              <colgroup>
                <col className="w-[143px]" />
                <col className="w-[63px]" />
                <col className="w-[63px]" />
              </colgroup>
              <thead>
                <tr className="h-[21px]">
                  <th className="border border-[#dcdcdc] p-0 pt-[2px] font-normal">图层构件</th>
                  <th className="border border-[#dcdcdc] p-0 pt-[2px] font-normal">显示图元</th>
                  <th className="border border-[#dcdcdc] p-0 pt-[2px] font-normal">显示名称</th>
                </tr>
              </thead>
              <tbody>
                {rows.map((r, i) => (
                  <TreeRow key={i} row={r} />
                ))}
              </tbody>
            </table>
          </div>
          <div className="flex h-[38px] shrink-0 items-center justify-end">
            <button className="-mr-[2px] h-[26px] rounded-[4px] border border-[#c8c8c8] px-2 pt-px">恢复默认设置</button>
          </div>
        </aside>
      </main>

      {/* status */}
      <footer className="flex h-[25px] shrink-0 items-start overflow-hidden bg-[#fcfcfc] pt-[3px] leading-[26px] whitespace-nowrap">
        <span className="-ml-1 w-[90px]">层高： 5.02</span>
        <span className="w-[140px]">标高： -5.15~-0.13</span>
        <span className="w-[110px]">选中图元：0</span>
        <span className="w-[110px]">隐藏图元：0</span>
        <div className="flex gap-1">
          {statusTools.map((t) => (
            <button
              key={t.label}
              aria-label={t.label}
              className={`flex h-[26px] items-center justify-center gap-1 rounded-[3px] border ${t.caret ? "w-9" : "w-[25px]"} ${
                t.on ? "border-[#3d8bf0] bg-[#dbe8fb]" : "border-[#9a9a9a] bg-white"
              }`}
            >
              <svg width="18" height="18" viewBox="0 0 18 18" fill="none" stroke="#4f586b" strokeWidth="1.300">
                <path d={t.d} />
                {t.on && <circle cx="3" cy="3" r="1.500" stroke="#1f7bf2" fill="#fff" />}
                {t.label === "交点" && <circle cx="9" cy="9" r="1.500" stroke="#1f7bf2" fill="#fff" />}
                {t.label === "角度" && <circle cx="8" cy="8" r="1.500" fill="#fff" />}
                {t.label === "输入" && <path d="M9 12h4v3H9z" fill="#4f586b" />}
                {t.label === "选择" && <path d="M4 4h8v8H4z" fill="#4f586b" />}
                {(t.label === "选择" || t.label === "折线") && <path d="M11 9l6 4-3 1-1 3z" fill="#4f586b" stroke="#fff" strokeWidth="0.500" />}
                {t.label === "折线" && <circle cx="6" cy="5" r="1.500" fill="#fff" />}
              </svg>
              {t.caret && <Caret />}
            </button>
          ))}
        </div>
        <Maximize2 size={18} strokeWidth={1.5} className="mt-[3px] ml-[14px] text-[#444]" />
        <span className="ml-[2px]">选择要保存的图元，右键确认</span>
      </footer>
    </div>
  );
}
